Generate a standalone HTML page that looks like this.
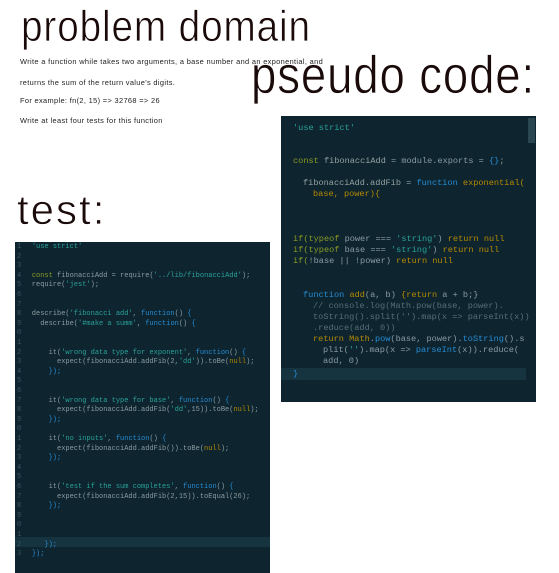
<!DOCTYPE html>
<html><head><meta charset="utf-8"><style>
body{margin:0;width:559px;height:573px;background:#fff;position:relative;overflow:hidden;font-family:"Liberation Sans",sans-serif}
.t{position:absolute;font-family:"Liberation Sans",sans-serif;color:#1a0a0a;white-space:nowrap;line-height:1;transform-origin:0 0;-webkit-text-stroke:0.7px #fff}
.s{position:absolute;left:20px;font-size:7.4px;letter-spacing:.35px;color:#222;white-space:nowrap}
.p{position:absolute;background:#0e2530;font-family:"Liberation Mono",monospace;white-space:pre;color:#8a9aa0}
.l{position:absolute;left:0;line-height:10px}
.n{position:absolute;left:2px;color:#3a5560}
.g{color:#8a9a22}.q{color:#2aa198}.b{color:#268bd2}.o{color:#b58900}.c{color:#586e75}.w{color:#93a1a1}
</style></head><body>
<div class="t" style="left:21px;top:5px;font-size:44px;transform:scaleX(.88);letter-spacing:1px">problem domain</div>
<div class="t" style="left:251px;top:49px;font-size:53px;transform:scaleX(.86);letter-spacing:1px">pseudo code:</div>
<div class="t" style="left:17px;top:189px;font-size:42px;letter-spacing:2px">test:</div>
<div class="s" style="top:57px">Write a function while takes two arguments, a base number and an exponential, and</div>
<div class="s" style="top:78px">returns the sum of the return value's digits.</div>
<div class="s" style="top:96px">For example: fn(2, 15) =&gt; 32768 =&gt; 26</div>
<div class="s" style="top:116px">Write at least four tests for this function</div>

<div class="p" style="left:281px;top:116px;width:255px;height:286px;font-size:8.6px">
<div style="position:absolute;left:0;top:252px;width:245px;height:12px;background:#163440"></div>
<div style="position:absolute;left:247px;top:2px;width:7px;height:25px;background:#2a4650"></div>
<div class="l" style="top:7px;left:12px"><span class="q">'use strict'</span></div>
<div class="l" style="top:40px;left:12px"><span class="g">const</span> <span class="w">fibonacciAdd</span> = module.exports = <span class="b">{}</span>;</div>
<div class="l" style="top:62px;left:22px"><span class="w">fibonacciAdd.addFib</span> = <span class="b">function</span> <span class="o">exponential(</span></div>
<div class="l" style="top:73px;left:32px"><span class="o">base, power){</span></div>
<div class="l" style="top:118px;left:12px"><span class="g">if(typeof</span> power === <span class="q">'string'</span>) <span class="o">return null</span></div>
<div class="l" style="top:129px;left:12px"><span class="g">if(typeof</span> base === <span class="q">'string'</span>) <span class="o">return null</span></div>
<div class="l" style="top:140px;left:12px"><span class="g">if(</span>!base || !power) <span class="o">return null</span></div>
<div class="l" style="top:174px;left:22px"><span class="b">function</span> <span class="o">add</span>(a, b) <span class="o">{return</span> a + b;}</div>
<div class="l" style="top:185px;left:32px"><span class="c">// console.log(Math.pow(base, power).</span></div>
<div class="l" style="top:196px;left:32px"><span class="c">toString().split('').map(x =&gt; parseInt(x))</span></div>
<div class="l" style="top:207px;left:32px"><span class="c">.reduce(add, 0))</span></div>
<div class="l" style="top:218px;left:32px"><span class="o">return</span> <span class="o">Math</span>.<span class="b">pow</span>(base, power).<span class="b">toString</span>().s</div>
<div class="l" style="top:229px;left:42px">plit(<span class="q">''</span>).map(x =&gt; <span class="b">parseInt</span>(x)).reduce(</div>
<div class="l" style="top:240px;left:42px">add, 0)</div>
<div class="l" style="top:253px;left:12px"><span class="b">}</span></div>
</div>

<div class="p" style="left:15px;top:242px;width:255px;height:331px;font-size:7px">
<div style="position:absolute;left:0;top:295px;width:255px;height:10px;background:#163440"></div>
<div class="l" style="top:0px"><span class="n">1</span>    <span class="q">'use strict'</span></div>
<div class="l" style="top:9.6px"><span class="n">2</span></div>
<div class="l" style="top:19.2px"><span class="n">3</span></div>
<div class="l" style="top:28.8px"><span class="n">4</span>    <span class="g">const</span> fibonacciAdd = require(<span class="q">'../lib/fibonacciAdd'</span>);</div>
<div class="l" style="top:38.4px"><span class="n">5</span>    require(<span class="q">'jest'</span>);</div>
<div class="l" style="top:48px"><span class="n">6</span></div>
<div class="l" style="top:57.6px"><span class="n">7</span></div>
<div class="l" style="top:67.2px"><span class="n">8</span>    describe(<span class="q">'fibonacci add'</span>, <span class="b">function</span>() <span class="b">{</span></div>
<div class="l" style="top:76.8px"><span class="n">9</span>      describe(<span class="q">'#make a summ'</span>, <span class="b">function</span>() <span class="b">{</span></div>
<div class="l" style="top:86.4px"><span class="n">0</span></div>
<div class="l" style="top:96px"><span class="n">1</span></div>
<div class="l" style="top:105.6px"><span class="n">2</span>        it(<span class="q">'wrong data type for exponent'</span>, <span class="b">function</span>() <span class="b">{</span></div>
<div class="l" style="top:115.2px"><span class="n">3</span>          expect(fibonacciAdd.addFib(2,<span class="q">'dd'</span>)).toBe(<span class="o">null</span>);</div>
<div class="l" style="top:124.8px"><span class="n">4</span>        <span class="b">});</span></div>
<div class="l" style="top:134.4px"><span class="n">5</span></div>
<div class="l" style="top:144px"><span class="n">6</span></div>
<div class="l" style="top:153.6px"><span class="n">7</span>        it(<span class="q">'wrong data type for base'</span>, <span class="b">function</span>() <span class="b">{</span></div>
<div class="l" style="top:163.2px"><span class="n">8</span>          expect(fibonacciAdd.addFib(<span class="q">'dd'</span>,15)).toBe(<span class="o">null</span>);</div>
<div class="l" style="top:172.8px"><span class="n">9</span>        <span class="b">});</span></div>
<div class="l" style="top:182.4px"><span class="n">0</span></div>
<div class="l" style="top:192px"><span class="n">1</span>        it(<span class="q">'no inputs'</span>, <span class="b">function</span>() <span class="b">{</span></div>
<div class="l" style="top:201.6px"><span class="n">2</span>          expect(fibonacciAdd.addFib()).toBe(<span class="o">null</span>);</div>
<div class="l" style="top:211.2px"><span class="n">3</span>        <span class="b">});</span></div>
<div class="l" style="top:220.8px"><span class="n">4</span></div>
<div class="l" style="top:230.4px"><span class="n">5</span></div>
<div class="l" style="top:240px"><span class="n">6</span>        it(<span class="q">'test if the sum completes'</span>, <span class="b">function</span>() <span class="b">{</span></div>
<div class="l" style="top:249.6px"><span class="n">7</span>          expect(fibonacciAdd.addFib(2,15)).toEqual(26);</div>
<div class="l" style="top:259.2px"><span class="n">8</span>        <span class="b">});</span></div>
<div class="l" style="top:268.8px"><span class="n">9</span></div>
<div class="l" style="top:278.4px"><span class="n">0</span></div>
<div class="l" style="top:288px"><span class="n">1</span></div>
<div class="l" style="top:297.6px"><span class="n">2</span>       <span class="b">});</span></div>
<div class="l" style="top:307.2px"><span class="n">3</span>    <span class="b">});</span></div>
</div>
</body></html>
